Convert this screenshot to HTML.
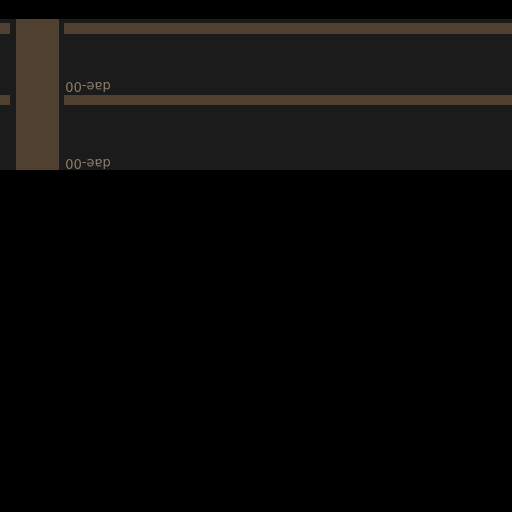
<!DOCTYPE html>
<html><head><style>
html,body{margin:0;padding:0;background:#000;width:512px;height:512px;overflow:hidden}
.p{position:absolute;left:0;top:19px;width:512px;height:151px;background:#1b1b1b}
.b{position:absolute;background:#4f4030}
.t{position:absolute;left:65px;font:13px "DejaVu Sans","Liberation Sans",sans-serif;color:#8c7d68;transform:rotate(180deg);line-height:13px;width:46px;text-align:center}
</style></head><body>
<div class="p"></div>
<div class="b" style="left:16px;top:19px;width:43px;height:151px"></div>
<div class="b" style="left:0;top:23px;width:10px;height:11px"></div>
<div class="b" style="left:64px;top:23px;width:448px;height:11px"></div>
<div class="b" style="left:0;top:95px;width:10px;height:10px"></div>
<div class="b" style="left:64px;top:95px;width:448px;height:10px"></div>
<div class="t" style="top:79px">dae-00</div>
<div class="t" style="top:156px">dae-00</div>
</body></html>
